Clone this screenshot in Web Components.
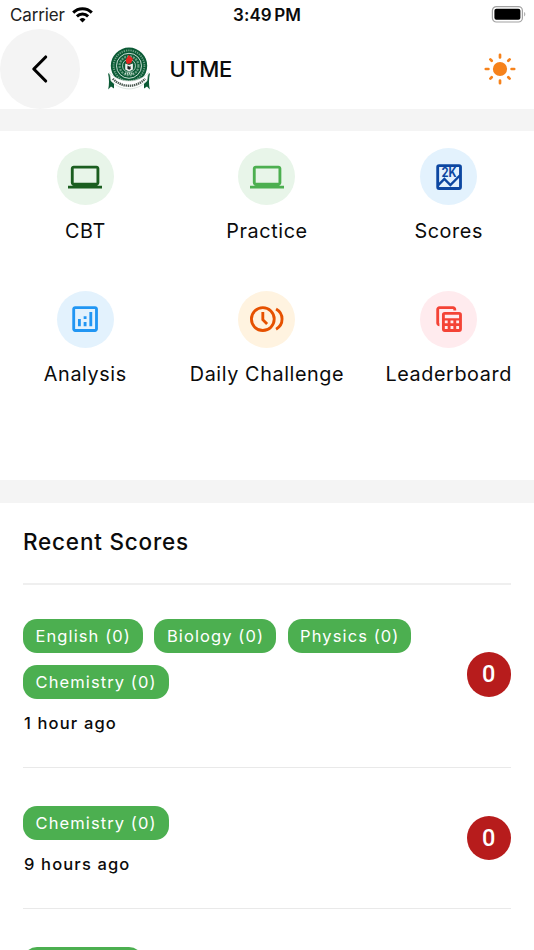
<!DOCTYPE html>
<html lang="en">
<head>
<meta charset="utf-8">
<title>UTME</title>
<style>
  html, body {
    margin: 0;
    height: 950px;
    overflow: hidden;
    background: #fff;
  }
  body {
    font-family: Inter, "Liberation Sans", sans-serif;
    color: #0b0b0b;
  }
</style>
</head>
<body>
<utme-app></utme-app>

<script>
/** Create a template from markup. */
function template (markup) {
  const element = document.createElement('template')
  element.innerHTML = markup
  return element
}

/** Base class: opens the shadow root and clones the template of the class. */
class BaseElement extends HTMLElement {
  constructor () {
    super()
    this.attachShadow({ mode: 'open' })
    this.shadowRoot.appendChild(this.constructor.template.content.cloneNode(true))
  }
}

/** Phone status bar: carrier, clock and battery. */
class StatusBar extends BaseElement {}
StatusBar.template = template(`
  <style>
    :host {
      display: grid;
      grid-template-columns: 1fr auto 1fr;
      align-items: center;
      height: 29px;
      padding: 0 8px 0 10px;
      box-sizing: border-box;
      font-size: 17px;
      line-height: 29px;
    }
    svg { display: block; }
    .carrier { display: flex; align-items: center; gap: 7px; letter-spacing: -0.15px; color: #222; }
    .carrier span, .time { padding-top: 2px; line-height: 27px; }
    .time { font-weight: 600; letter-spacing: 0.1px; word-spacing: -2px; margin-left: -2px; }
    .battery { justify-self: end; }
  </style>
  <span class="carrier"><span>Carrier</span>
    <svg width="21" height="16" viewBox="0 0 21 16" fill="none" stroke="#000" stroke-width="3">
      <path d="M1.2 5.6a13.2 13.2 0 0 1 18.6 0"/>
      <path d="M4.9 9.4a8 8 0 0 1 11.2 0"/>
      <path d="M10.5 15.6l-3-3.1a4.3 4.3 0 0 1 6 0z" fill="#000" stroke="none"/>
    </svg>
  </span>
  <span class="time">3:49 PM</span>
  <svg class="battery" width="35" height="17" viewBox="0 0 35 17">
    <rect x="1.4" y=".6" width="30" height="15.4" rx="4" fill="#fff" stroke="#a2a2a2" stroke-width="1.2"/>
    <rect x="3.4" y="2.8" width="26" height="11" rx="2" fill="#000"/>
    <path d="M33.2 6.1v4.4c1.5-.6 1.5-3.8 0-4.4z" fill="#a2a2a2"/>
  </svg>
`)

/** Crest with a ring of lettering and a ribbon below it. */
class BoardCrest extends BaseElement {}
BoardCrest.template = template(`
  <style>
    :host { display: block; }
    svg { display: block; }
  </style>
  <svg width="44" height="44" viewBox="0 0 44 44" fill="none">
    <circle cx="22" cy="18.8" r="18.2" fill="#0b5a35"/>
    <circle cx="22" cy="18.8" r="15.4" stroke="#6fa387" stroke-width="1.8" stroke-dasharray="1.3 1"/>
    <circle cx="22" cy="18.8" r="12.5" stroke="#dfece5" stroke-width=".9"/>
    <circle cx="22" cy="18.8" r="9.4" stroke="#6b9f83" stroke-width="2.2" stroke-dasharray="2 1"/>
    <circle cx="22" cy="18.8" r="6.5" fill="#0e5b38" stroke="#ccdfd4" stroke-width=".8"/>
    <path d="M18.2 16.5l3.8 1.5 3.9-1.5v6L22 24.5l-3.8-2z" fill="#eef2ef"/>
    <path d="M20.5 18.5l2 1.2.8-1 .5 3-1.6 1-1.8-1z" fill="#222"/>
    <path d="M18.8 14c0-3.2 2.2-3 2.5-6 2.6 1 2.5 2.2 4.5 3.6 0 2.3-1.5 3.1-1.5 4.6l-4.4.7z" fill="#e6251f"/>
    <path d="M18 26.5h8.5" stroke="#c5dacd" stroke-width="2" stroke-dasharray="1.2 .7"/>
    <path d="M1 26l6 5v10.500l-3-2-2.800 3c1-5 1.200-10-.2-16.500z" fill="#0b5a35"/>
    <path d="M43 26l-6 5v10.500l3-2 2.800 3c-1-5-1.200-10 .2-16.500z" fill="#0b5a35"/>
    <path d="M2.600 25.600C12 36.800 32 36.800 41.400 25.600l-1.400 8.400C29.500 44.500 14.500 44.500 4 34z" fill="#fff" stroke="#c4d3ca" stroke-width=".6"/>
    <path d="M5.800 31.700c9 9.400 23.400 9.400 32.400 0" stroke="#4a5850" stroke-width="2.300" stroke-dasharray="1.400 .7"/>
  </svg>
`)

/** Header with back button, title (slot) and theme switch. */
class PageHeader extends BaseElement {}
PageHeader.template = template(`
  <style>
    :host {
      display: flex;
      align-items: center;
      height: 79.5px;
      padding-right: 18.5px;
    }
    svg { display: block; }
    .back {
      display: grid;
      place-items: center;
      width: 80px;
      height: 80px;
      border-radius: 50%;
      background: #f4f4f4;
    }
    board-crest { margin-left: 27px; }
    h1 {
      flex: 1;
      margin: 0 0 0 18.5px;
      font-size: 22px;
      font-weight: 500;
      line-height: 30px;
      letter-spacing: -0.4px;
    }
  </style>
  <div class="back">
    <svg width="30" height="30" viewBox="0 0 30 30" fill="none" stroke="#000" stroke-width="3.1" stroke-linecap="round" stroke-linejoin="round">
      <path d="M20.700 3L8.800 15l11.900 12"/>
    </svg>
  </div>
  <board-crest></board-crest>
  <h1><slot></slot></h1>
  <svg width="32" height="32" viewBox="-16 -16 32 32" fill="none" stroke="#f6821b" stroke-width="2.7" stroke-linecap="round">
    <circle r="7.1" fill="#f6821b" stroke="none"/>
    <path d="M0-14.200v2.600M0 14.200v-2.600M-14.200 0h2.600M14.200 0h-2.600"/>
    <path d="M-9.600-9.600l1.300 1.300M9.600-9.600L8.300-8.300M-9.600 9.600l1.300-1.300M9.600 9.600L8.300 8.300"/>
  </svg>
`)

/** Grey band between two sections. */
class SectionGap extends BaseElement {}
SectionGap.template = template(`
  <style>:host { display: block; height: 22.5px; background: #f4f4f4; }</style>
`)

/** Icon shapes on a 24 unit grid. */
const ICONS = {
  laptop: '<path fill="currentColor" d="M20 18c1.1 0 2-.9 2-2V6c0-1.1-.9-2-2-2H4c-1.1 0-2 .9-2 2v10c0 1.1.9 2 2 2H0v2h24v-2zM4 6h16v10H4z"/>',
  scores: `
    <rect x="4" y="4" width="16" height="16" rx="1" stroke-width="2"/>
    <path d="M4.2 17.8l4.5-4.5 4.2 4.3 6.8-6.9" stroke-width="1.7"/>
    <text x="6.6" y="12.1" font-size="8.8" font-weight="700" textLength="10.6" lengthAdjust="spacingAndGlyphs" fill="currentColor" stroke="none">2K</text>`,
  analysis: '<path fill="currentColor" d="M19 3H5c-1.1 0-2 .9-2 2v14c0 1.1.9 2 2 2h14c1.1 0 2-.9 2-2V5c0-1.1-.9-2-2-2zm0 16H5V5h14zM7 12h2v5H7zM15 7h2v10h-2zM11 14h2v3h-2zM11 10h2v2h-2z"/>',
  challenge: `
    <circle cx="9" cy="12" r="8" stroke-width="2"/>
    <path d="M9 7v5.4l3 3" stroke-width="2"/>
    <path d="M18.3 4.9a8.1 8.1 0 0 1 0 14.2" stroke-width="2"/>`,
  leaderboard: `
    <path d="M16 6V5.2A1.2 1.2 0 0 0 14.8 4H5.2A1.2 1.2 0 0 0 4 5.2v9.6A1.2 1.2 0 0 0 5.2 16" stroke-width="2"/>
    <path fill="currentColor" fill-rule="evenodd" d="M9 7h10a2 2 0 0 1 2 2v10a2 2 0 0 1-2 2H9a2 2 0 0 1-2-2V9a2 2 0 0 1 2-2zM9 9v2.4h10V9zM9 12.9v2h2v-2zM13 12.9v2h2v-2zM17 12.9v2h2v-2zM9 16.9V19h2v-2.1zM13 16.9V19h2v-2.1zM17 16.9V19h2v-2.1z"/>`
}

/** Tile with a round icon and a label; attributes: icon, color, tint. */
class MenuTile extends BaseElement {
  connectedCallback () {
    this.style.setProperty('--color', this.getAttribute('color'))
    this.style.setProperty('--tint', this.getAttribute('tint'))
    this.shadowRoot.querySelector('svg').innerHTML = ICONS[this.getAttribute('icon')]
  }
}
MenuTile.template = template(`
  <style>
    :host { display: flex; flex-direction: column; align-items: center; }
    .disc {
      display: grid;
      place-items: center;
      width: 57px;
      height: 57px;
      border-radius: 50%;
      color: var(--color);
      background: var(--tint);
    }
    svg { display: block; }
    .label {
      margin-top: 13px;
      font-size: 19.8px;
      line-height: 26px;
      letter-spacing: 0.6px;
      white-space: nowrap;
    }
  </style>
  <div class="disc">
    <svg width="34.2" height="34.2" viewBox="0 0 24 24" fill="none" stroke="currentColor" stroke-width="0"></svg>
  </div>
  <span class="label"><slot></slot></span>
`)

/** Green pill with a subject and its score. */
class SubjectChip extends BaseElement {}
SubjectChip.template = template(`
  <style>
    :host {
      display: block;
      box-sizing: border-box;
      min-width: 119.5px;
      height: 34px;
      padding: 0 12px 0 12.5px;
      border-radius: 14px;
      color: #fff;
      background: #4caf50;
      font-size: 16.5px;
      line-height: 34px;
      letter-spacing: 1.1px;
      white-space: nowrap;
    }
  </style>
  <slot></slot>
`)

/** One recent attempt: chips in the default slot, time and total as attributes. */
class ScoreEntry extends BaseElement {
  connectedCallback () {
    const total = this.shadowRoot.querySelector('.total')
    this.shadowRoot.querySelector('.when').textContent = this.getAttribute('when')
    total.textContent = this.getAttribute('total')
    total.hidden = !this.hasAttribute('total')
  }
}
ScoreEntry.template = template(`
  <style>
    :host {
      display: flex;
      align-items: center;
      justify-content: space-between;
      padding: 38px 0 32px;
      border-bottom: 1px solid #e9e9e9;
    }
    .chips { display: flex; flex-wrap: wrap; gap: 11.5px; width: 400px; }
    .when {
      margin: 12px 0 0 1px;
      font-size: 16.5px;
      font-weight: 500;
      line-height: 24px;
      letter-spacing: 1.15px;
    }
    .total {
      width: 44.5px;
      margin-bottom: 5px;
      border-radius: 50%;
      color: #fff;
      background: #b71c1c;
      font: 500 23.5px/44.5px Roboto, Inter, sans-serif;
      text-align: center;
    }
    .total[hidden] { display: none; }
  </style>
  <div>
    <div class="chips"><slot></slot></div>
    <div class="when"></div>
  </div>
  <div class="total"></div>
`)

/** The whole screen. */
class UtmeApp extends BaseElement {}
UtmeApp.template = template(`
  <style>
    :host { display: block; width: 534px; height: 950px; overflow: hidden; background: #fff; }
    nav {
      display: grid;
      grid-template-columns: repeat(3, minmax(0, 1fr));
      grid-auto-rows: 96px;
      gap: 46.6px 57px;
      box-sizing: border-box;
      height: 349px;
      padding: 17.2px 23px 0;
    }
    section { padding: 0 23px; }
    h2 {
      margin: 0;
      padding: 23px 0 25.7px;
      border-bottom: 2px solid #efefef;
      font-size: 22.5px;
      font-weight: 500;
      line-height: 32px;
      letter-spacing: 0.8px;
    }
    h2 + score-entry { margin-top: -4px; }
  </style>
  <status-bar></status-bar>
  <page-header>UTME</page-header>
  <section-gap></section-gap>
  <nav>
    <menu-tile icon="laptop" color="#1b5e20" tint="#e8f5e9">CBT</menu-tile>
    <menu-tile icon="laptop" color="#4caf50" tint="#e8f5e9">Practice</menu-tile>
    <menu-tile icon="scores" color="#0d47a1" tint="#e3f2fd">Scores</menu-tile>
    <menu-tile icon="analysis" color="#2196f3" tint="#e3f2fd">Analysis</menu-tile>
    <menu-tile icon="challenge" color="#e65100" tint="#fff3e0">Daily Challenge</menu-tile>
    <menu-tile icon="leaderboard" color="#f44336" tint="#ffebee">Leaderboard</menu-tile>
  </nav>
  <section-gap></section-gap>
  <section>
    <h2>Recent Scores</h2>
    <score-entry when="1 hour ago" total="0">
      <subject-chip>English (0)</subject-chip>
      <subject-chip>Biology (0)</subject-chip>
      <subject-chip>Physics (0)</subject-chip>
      <subject-chip>Chemistry (0)</subject-chip>
    </score-entry>
    <score-entry when="9 hours ago" total="0">
      <subject-chip>Chemistry (0)</subject-chip>
    </score-entry>
    <score-entry when="">
      <subject-chip></subject-chip>
    </score-entry>
  </section>
`)

customElements.define('status-bar', StatusBar)
customElements.define('board-crest', BoardCrest)
customElements.define('page-header', PageHeader)
customElements.define('section-gap', SectionGap)
customElements.define('menu-tile', MenuTile)
customElements.define('subject-chip', SubjectChip)
customElements.define('score-entry', ScoreEntry)
customElements.define('utme-app', UtmeApp)
</script>
</body>
</html>
